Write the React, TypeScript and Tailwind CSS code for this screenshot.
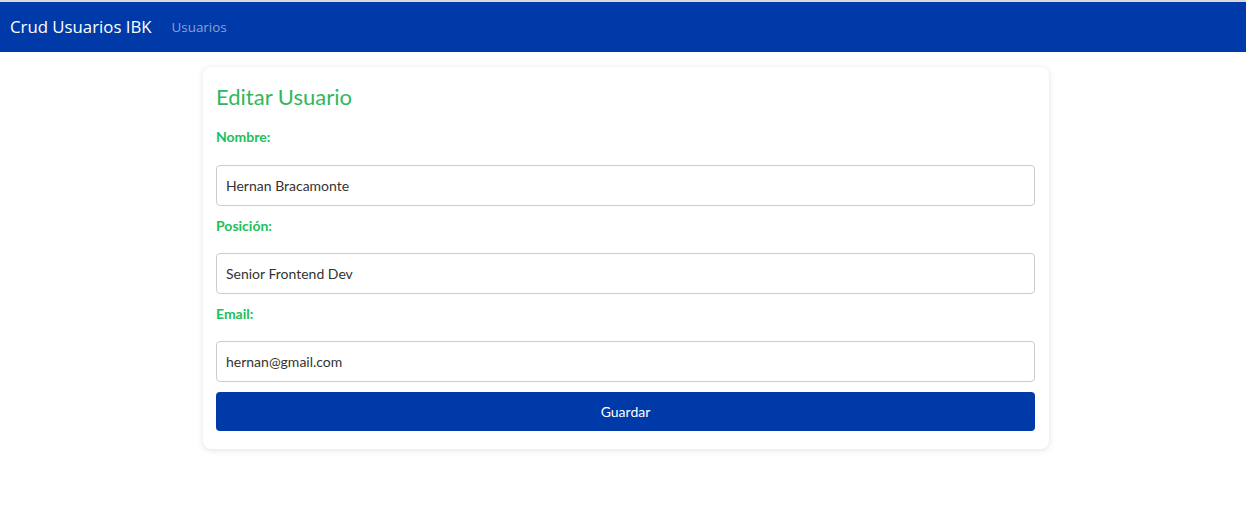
export default function App() {
  return (
    <div className="min-h-[518px] bg-white" style={{ fontFamily: 'Lato, "Noto Sans", sans-serif' }}>
      <div className="h-[2px] bg-[#d9d9d9]" />
      {/* Navbar */}
      <nav className="h-[50px] bg-[#003aa8] flex items-center px-[10px] gap-[20px]">
        <span className="text-white text-[16.8px]" style={{ fontFamily: '"Open Sans", sans-serif' }}>
          Crud Usuarios IBK
        </span>
        <span className="text-[#8ea0d6] text-[13.4px]" style={{ fontFamily: '"Open Sans", sans-serif' }}>
          Usuarios
        </span>
      </nav>

      {/* Form card */}
      <div className="flex justify-center pl-[6px] pt-[15px]">
        <div className="w-[846px] bg-white rounded-lg shadow-[0_1px_6px_rgba(0,0,0,0.12)] pl-[13px] pr-[14px] pt-[15px] pb-[18px]">
          <h2 className="text-[22px] leading-[30px] text-[#2fb85a] mb-[8px]">Editar Usuario</h2>

          <label className="block font-bold text-[14px] leading-[16px] text-[#20c05a] mt-[17px] mb-[20px]">Nombre:</label>
          <input
            className="w-full h-[41px] border border-[#cccccc] rounded-[4px] px-[9px] text-[14px] text-[#333] outline-none"
            defaultValue="Hernan Bracamonte"
          />

          <label className="block font-bold text-[14px] leading-[16px] text-[#20c05a] mt-[12px] mb-[19px]">Posición:</label>
          <input
            className="w-full h-[41px] border border-[#cccccc] rounded-[4px] px-[9px] text-[14px] text-[#333] outline-none"
            defaultValue="Senior Frontend Dev"
          />

          <label className="block font-bold text-[14px] leading-[16px] text-[#20c05a] mt-[12px] mb-[19px]">Email:</label>
          <input
            className="w-full h-[41px] border border-[#cccccc] rounded-[4px] px-[9px] text-[14px] text-[#333] outline-none"
            defaultValue="hernan@gmail.com"
          />

          <button className="w-full h-[39px] mt-[10px] bg-[#003aa8] text-white text-[14px] rounded-[4px]">
            Guardar
          </button>
        </div>
      </div>
    </div>
  );
}
